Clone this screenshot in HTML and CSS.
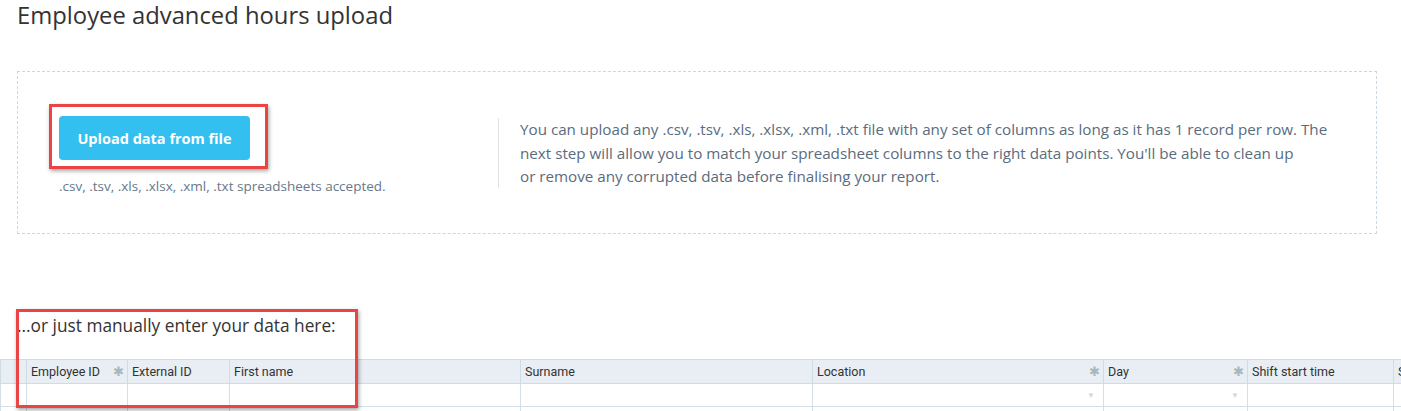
FILE: index.html
```html
<!DOCTYPE html>
<html lang="en">
<head>
  <meta charset="UTF-8">
  <meta name="viewport" content="width=device-width, initial-scale=1.0">
  <title>Employee advanced hours upload</title>
  <link rel="stylesheet" href="styles.css">
</head>
<body>

  <div class="page">
    <h1 class="title">Employee advanced hours upload</h1>

    <div class="dropzone">
      <div class="upload-col">
        <div class="mark">
          <button type="button" class="upload-btn">Upload data from file</button>
        </div>
        <p class="accepted">.csv, .tsv, .xls, .xlsx, .xml, .txt spreadsheets accepted.</p>
      </div>
      <div class="divider"></div>
      <p class="help">You can upload any .csv, .tsv, .xls, .xlsx, .xml, .txt file with any set of columns as long as it has 1 record per row. The<br>
        next step will allow you to match your spreadsheet columns to the right data points. You'll be able to clean up<br>
        or remove any corrupted data before finalising your report.</p>
    </div>

    <h2 class="manual">...or just manually enter your data here:</h2>
  </div>

  <div class="grid-wrap">
    <table class="grid">
      <colgroup>
        <col class="c-num">
        <col class="c-emp">
        <col class="c-ext">
        <col class="c-wide">
        <col class="c-wide2">
        <col class="c-wide">
        <col class="c-day">
        <col class="c-mid">
        <col class="c-mid">
      </colgroup>
      <thead>
        <tr>
          <th></th>
          <th>Employee ID <span class="req">&#10033;</span></th>
          <th>External ID</th>
          <th>First name</th>
          <th>Surname</th>
          <th>Location <span class="req">&#10033;</span></th>
          <th>Day <span class="req">&#10033;</span></th>
          <th>Shift start time</th>
          <th>Shift end time</th>
        </tr>
      </thead>
      <tbody>
        <tr>
          <td></td>
          <td></td>
          <td></td>
          <td></td>
          <td></td>
          <td><span class="drop">&#9660;</span></td>
          <td><span class="drop">&#9660;</span></td>
          <td></td>
          <td></td>
        </tr>
        <tr>
          <td></td><td></td><td></td><td></td><td></td><td></td><td></td><td></td><td></td>
        </tr>
      </tbody>
    </table>
  </div>

  <div class="mark-box"></div>

</body>
</html>
```

FILE: styles.css
```css
body {
  margin: 0;
  font-family: "Open Sans", Lato, sans-serif;
  background-color: #fff;
  color: #333;
  overflow: hidden;
}

.page {
  padding: 0 24px 0 17px;
}

.title {
  margin: 0;
  padding-top: 1px;
  font-size: 23.8px;
  font-weight: 400;
  color: #333;
  line-height: 28px;
}

.dropzone {
  margin-top: 42px;
  height: 161px;
  border: 1px dashed #cbd8e2;
  display: flex;
  align-items: center;
}

.upload-col {
  width: 480px;
  padding-left: 31px;
  box-sizing: border-box;
  margin-top: -6px;
}

.mark {
  display: inline-block;
  border: 3px solid #ea4444;
  padding: 9px 15px 6px 7px;
  box-shadow: 1px 2px 4px rgba(0, 0, 0, 0.35);
}

.upload-btn {
  display: block;
  width: 191px;
  height: 44px;
  background-color: #33bfef;
  color: #fff;
  border: none;
  border-radius: 4px;
  font-family: "Open Sans", sans-serif;
  font-size: 14.5px;
  font-weight: 700;
  cursor: pointer;
}

.accepted {
  margin: 8px 0 0 10px;
  font-size: 13.5px;
  color: #66788a;
}

.divider {
  width: 1px;
  height: 70px;
  background-color: #dfe4e8;
}

.help {
  margin: 2px 0 0 21px;
  width: 840px;
  font-size: 15.2px;
  line-height: 23.5px;
  color: #5a6c7e;
  white-space: nowrap;
}

.manual {
  margin: 79px 0 0;
  font-size: 17.3px;
  font-weight: 400;
  color: #333;
  line-height: 26px;
}

.grid-wrap {
  margin-top: 20px;
  width: 100%;
  overflow: hidden;
}

.grid {
  table-layout: fixed;
  border-collapse: collapse;
  width: 1538px;
  font-family: Roboto, sans-serif;
  font-size: 12.5px;
}

.c-num { width: 26px; }
.c-emp { width: 101px; }
.c-ext { width: 102px; }
.c-wide { width: 291px; }
.c-wide2 { width: 292px; }
.c-day { width: 144px; }
.c-mid { width: 146px; }

.grid th {
  height: 23px;
  padding: 0 4px;
  text-align: left;
  font-weight: 400;
  color: #333;
  background-color: #e8eef4;
  border: 1px solid #cfdde3;
  white-space: nowrap;
  overflow: hidden;
}

.grid th .req {
  float: right;
  color: #a9b6bf;
  font-size: 13px;
  margin-right: -1px;
}

.grid td {
  height: 22px;
  padding: 0 5px;
  border: 1px solid #d4e0e6;
  background-color: #fff;
}

.grid td .drop {
  float: right;
  color: #d3d8dc;
  font-size: 8px;
  margin-right: 3px;
}

.mark-box {
  position: absolute;
  left: 16px;
  top: 309px;
  width: 336px;
  height: 93px;
  border: 3px solid #ea4444;
  box-shadow: 1px 2px 4px rgba(0, 0, 0, 0.35);
}
```
